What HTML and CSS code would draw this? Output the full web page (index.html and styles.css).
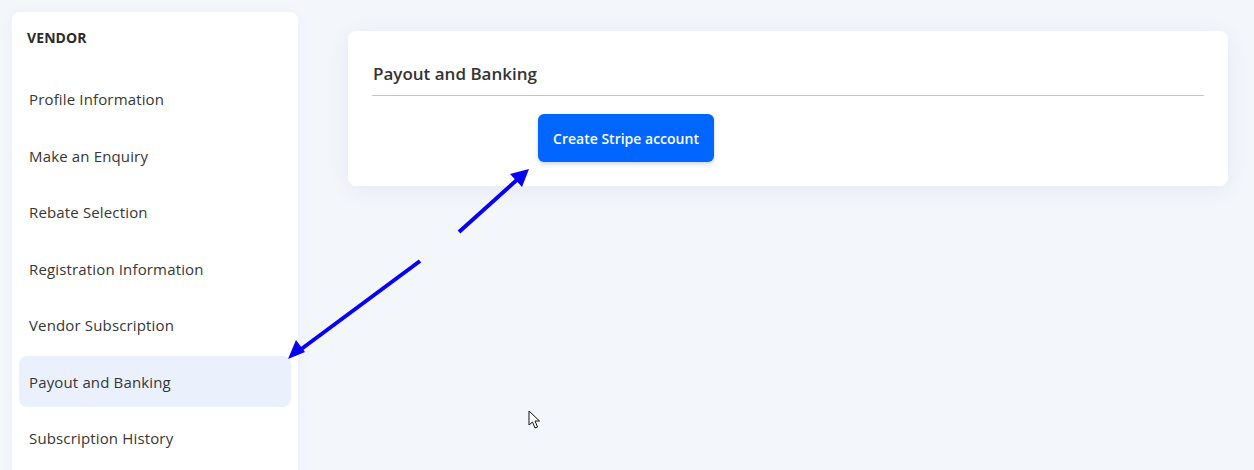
FILE: index.html
```html
<!DOCTYPE html>
<html>
<head>
<meta charset="utf-8">
<link rel="stylesheet" href="styles.css">
</head>
<body>
<div class="page">
  <aside class="sidebar">
    <div class="side-title">VENDOR</div>
    <nav class="menu">
      <a class="item">Profile Information</a>
      <a class="item">Make an Enquiry</a>
      <a class="item">Rebate Selection</a>
      <a class="item">Registration Information</a>
      <a class="item">Vendor Subscription</a>
      <a class="item active">Payout and Banking</a>
      <a class="item">Subscription History</a>
    </nav>
  </aside>
  <main class="main">
    <section class="card">
      <h2 class="card-title">Payout and Banking</h2>
      <div class="card-body">
        <button class="btn">Create Stripe account</button>
      </div>
    </section>
  </main>
</div>
<svg class="annot" width="1254" height="470" viewBox="0 0 1254 470">
  <g stroke="#0800f2" stroke-width="4" stroke-linecap="butt" fill="#0800f2">
    <line x1="420" y1="261" x2="300" y2="350"/>
    <polygon points="288,359 296,340 305,352" stroke="none"/>
    <line x1="459" y1="232" x2="519" y2="178"/>
    <polygon points="529,169 522,187 510,174" stroke="none"/>
  </g>
</svg>
<svg class="cursor" width="14" height="20" viewBox="0 0 14 20">
  <path d="M1 1 L1 15 L4.5 12 L7 18 L9.5 17 L7 11 L11.5 11 Z" fill="#fff" stroke="#111" stroke-width="1" stroke-linejoin="miter"/>
</svg>
</body>
</html>
```
FILE: styles.css
```css
html, body {
  margin: 0;
  padding: 0;
  background: #f3f6fb;
  font-family: "Open Sans", "Noto Sans", sans-serif;
  color: #333;
}
.page {
  display: flex;
  align-items: flex-start;
  padding: 12px 0 0 12px;
  height: 458px;
  overflow: hidden;
}
.sidebar {
  width: 286px;
  flex: none;
  background: #fff;
  border-radius: 8px;
  padding: 16px 7px 40px;
  box-sizing: border-box;
  box-shadow: 0 2px 16px rgba(20, 40, 90, 0.04);
}
.side-title {
  font-size: 14px;
  font-weight: 700;
  line-height: 20px;
  padding-left: 8px;
  color: #2b2b2b;
  letter-spacing: 0.1px;
}
.menu {
  display: flex;
  flex-direction: column;
  gap: 5.5px;
  margin-top: 25.5px;
}
.item {
  display: flex;
  align-items: center;
  height: 51px;
  padding-left: 10px;
  border-radius: 8px;
  font-size: 15px;
  color: #363636;
  letter-spacing: 0.15px;
}
.item.active {
  background: #eaf1fd;
}
.main {
  flex: 1;
  padding: 19px 26px 0 50px;
}
.card {
  background: #fff;
  border-radius: 8px;
  padding: 32px 24px 24px;
  box-shadow: 0 4px 24px rgba(20, 40, 90, 0.06);
}
.card-title {
  margin: 0;
  font-size: 17px;
  line-height: 22px;
  font-weight: 600;
  color: #333;
  padding-left: 1px;
  padding-bottom: 10px;
  border-bottom: 1px solid #cbc4bd;
}
.card-body {
  padding-top: 18px;
  padding-left: 166px;
}
.btn {
  display: block;
  height: 48px;
  width: 176px;
  border: none;
  border-radius: 6px;
  background: #0066ff;
  color: #fff;
  font-family: "Open Sans", "Noto Sans", sans-serif;
  font-size: 14px;
  font-weight: 600;
  box-shadow: 0 2px 4px rgba(0, 40, 120, 0.2);
  padding: 0;
}
.annot {
  position: absolute;
  left: 0;
  top: 0;
  pointer-events: none;
}
.cursor {
  position: absolute;
  left: 528px;
  top: 410px;
}
```
